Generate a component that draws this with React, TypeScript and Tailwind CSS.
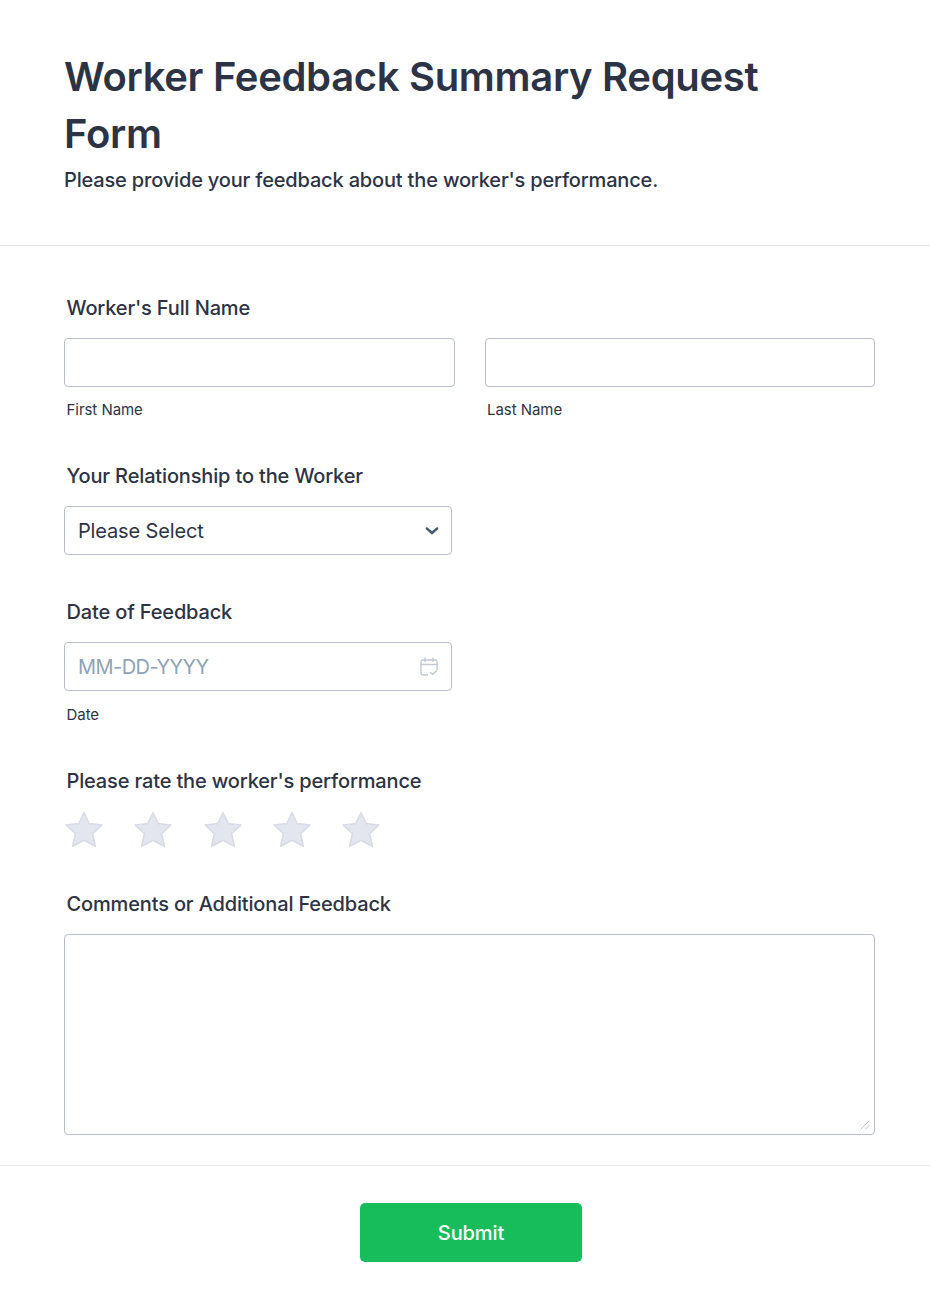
import React from 'react';

const font = { fontFamily: 'Inter, "Noto Sans", sans-serif' };

function Label({ children }: { children: React.ReactNode }) {
  return <label className="block pl-[2.5px] text-[20px] leading-[30px] font-medium tracking-[-0.15px] text-[#2c3345]">{children}</label>;
}

function SubLabel({ children }: { children: React.ReactNode }) {
  return <div className="mt-[13px] pl-[2.5px] text-[15px] leading-[20px] tracking-[-0.05px] text-[#2c3345]">{children}</div>;
}

function Star() {
  return (
    <svg width="40" height="38" viewBox="0 0 40 38" className="block">
      <path
        d="M20 1.5 L25.2 12.6 L38 14 L28.6 22.6 L31.4 35.2 L20 29.2 L8.6 35.2 L11.4 22.6 L2 14 L14.8 12.6 Z"
        fill="#e3e6ef"
        stroke="#d9dce7"
        strokeWidth="1.6"
        strokeLinejoin="round"
      />
    </svg>
  );
}

export default function App() {
  return (
    <div className="min-h-[1312px] w-[930px] bg-white" style={font}>
      {/* Header */}
      <div className="h-[246px] border-b border-[#dfe2e8] pl-[64px] pr-[160px] pt-[48px]">
        <h1 className="text-[40px] leading-[57px] font-semibold tracking-[-0.32px] text-[#2c3345]">Worker Feedback Summary Request Form</h1>
        <p className="mt-[4px] text-[20px] leading-[28px] font-medium tracking-[-0.17px] text-[#2c3345]">
          Please provide your feedback about the worker's performance.
        </p>
      </div>

      {/* Fields */}
      <div className="pl-[64px] pr-[55px] pt-[47px]">
        <Label>Worker's Full Name</Label>
        <div className="mt-[15px] grid grid-cols-2 gap-[30px]">
          <div>
            <input className="block h-[49px] w-full rounded border border-[#b9bdcc] bg-white" />
            <SubLabel>First Name</SubLabel>
          </div>
          <div>
            <input className="block h-[49px] w-full rounded border border-[#b9bdcc] bg-white" />
            <SubLabel>Last Name</SubLabel>
          </div>
        </div>

        <div className="mt-[41px]">
          <Label>Your Relationship to the Worker</Label>
          <div className="mt-[15px] flex h-[49px] w-[388px] items-center justify-between rounded border border-[#b9bdcc] pl-[13px] pr-[11px] text-[20px] tracking-[-0.15px] text-[#2c3345]">
            <span>Please Select</span>
            <svg width="16" height="16" viewBox="0 0 16 16" fill="none">
              <path d="M2.8 5.4 L8 10 L13.2 5.4" stroke="#46566e" strokeWidth="2.4" strokeLinecap="round" strokeLinejoin="round" />
            </svg>
          </div>
        </div>

        <div className="mt-[42px]">
          <Label>Date of Feedback</Label>
          <div className="mt-[15px] flex h-[49px] w-[388px] items-center justify-between rounded border border-[#b9bdcc] pl-[13px] pr-[13px] text-[20px] tracking-[-0.55px] text-[#8fa3b8]">
            <span>MM-DD-YYYY</span>
            <svg width="18" height="20" viewBox="0 0 18 20" fill="none" stroke="#c2cad5" strokeWidth="1.4" strokeLinecap="round" strokeLinejoin="round">
              <path d="M7.5 18 H3 a2 2 0 0 1 -2 -2 V5 a2 2 0 0 1 2 -2 H15 a2 2 0 0 1 2 2 V13" />
              <path d="M1 7.5 H17" />
              <path d="M5 1 V4.5 M13 1 V4.5" />
              <path d="M10.5 15.5 L12.5 17.5 L16.5 14" />
            </svg>
          </div>
          <div className="pt-[1px]">
            <SubLabel>Date</SubLabel>
          </div>
        </div>

        <div className="mt-[41px]">
          <Label>Please rate the worker's performance</Label>
          <div className="mt-[15px] flex gap-[29.3px]">
            <Star />
            <Star />
            <Star />
            <Star />
            <Star />
          </div>
        </div>

        <div className="mt-[40px]">
          <Label>Comments or Additional Feedback</Label>
          <div className="relative mt-[15px]">
            <textarea className="block h-[201px] w-full resize-none rounded border border-[#b9bdcc] bg-white" />
            <svg width="12" height="12" viewBox="0 0 12 12" className="absolute bottom-[4px] right-[4px]" stroke="#c4c8d2" strokeWidth="1" fill="none">
              <path d="M1.5 10.5 L10.5 1.5 M6 10.5 L10.5 6" />
            </svg>
          </div>
        </div>
      </div>

      {/* Footer */}
      <div className="mt-[30px] flex justify-center border-t border-[#e6e8ee] pl-[12px] pt-[37px]">
        <button className="h-[59px] w-[222px] rounded-[5px] bg-[#18bd5b] text-[20px] font-medium tracking-[-0.1px] text-white">Submit</button>
      </div>
    </div>
  );
}
